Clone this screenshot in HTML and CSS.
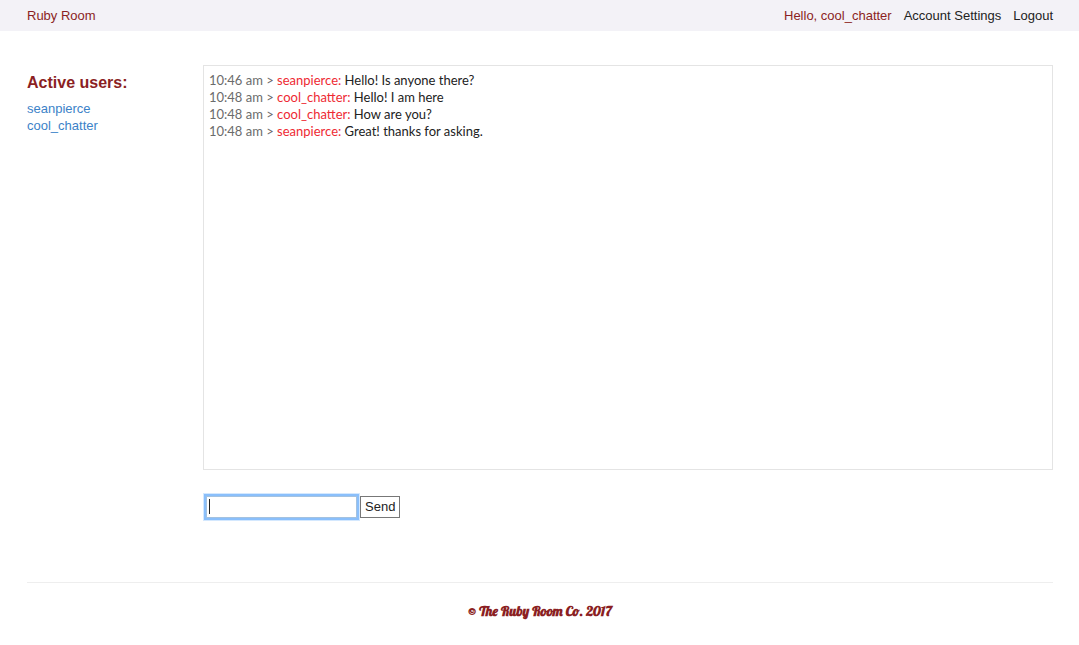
FILE: index.html
```html
<!DOCTYPE html>
<html lang="en">
<head>
<meta charset="utf-8">
<meta name="viewport" content="width=device-width, initial-scale=1">
<title>Ruby Room</title>
<link rel="stylesheet" href="styles.css">
</head>
<body>
<header class="topbar">
  <a class="brand" href="#">Ruby Room</a>
  <nav class="topnav">
    <span class="greeting">Hello, cool_chatter</span>
    <a href="#">Account Settings</a>
    <a href="#">Logout</a>
  </nav>
</header>
<main class="room">
  <aside class="users">
    <h1 class="users-title">Active users:</h1>
    <ul class="users-list">
      <li><a href="#">seanpierce</a></li>
      <li><a href="#">cool_chatter</a></li>
    </ul>
  </aside>
  <section class="chat">
    <div class="messages">
      <p class="message"><span class="time">10:46 am &gt;</span> <span class="author">seanpierce:</span> Hello! Is anyone there?</p>
      <p class="message"><span class="time">10:48 am &gt;</span> <span class="author">cool_chatter:</span> Hello! I am here</p>
      <p class="message"><span class="time">10:48 am &gt;</span> <span class="author">cool_chatter:</span> How are you?</p>
      <p class="message"><span class="time">10:48 am &gt;</span> <span class="author">seanpierce:</span> Great! thanks for asking.</p>
    </div>
    <form class="composer">
      <span class="composer-field">
        <input class="composer-input" type="text" aria-label="Message" autocomplete="off" autofocus>
      </span>
      <button class="composer-send" type="button">Send</button>
    </form>
  </section>
</main>
<footer class="footer">© The Ruby Room Co. 2017</footer>
</body>
</html>
```

FILE: styles.css
```css
* {
  box-sizing: border-box;
}

body {
  margin: 0;
  background: #fff;
  color: #222;
  font: 13px/17px "Liberation Sans", Arial, sans-serif;
}

a {
  color: inherit;
  text-decoration: none;
}

.topbar {
  display: flex;
  justify-content: space-between;
  padding: 7px 26px 7px 27px;
  background: #f3f2f7;
}

.brand,
.greeting {
  color: #8b1f23;
}

.topnav {
  display: flex;
  gap: 12px;
}

.room {
  display: flex;
  padding: 34px 26px 0 27px;
}

.users {
  flex: 0 0 176px;
  padding-top: 8px;
}

.users-title {
  margin: 0 0 8px;
  color: #8b1f23;
  font-size: 16px;
  line-height: 19px;
}

.users-list {
  margin: 0;
  padding: 0;
  list-style: none;
  color: #3c82c8;
}

.chat {
  flex: 1;
  min-width: 0;
}

.messages {
  min-height: 405px;
  padding: 6px 5px;
  border: 1px solid #e4e4e4;
  font-family: Lato, "Open Sans", sans-serif;
}

.message {
  margin: 0;
}

.time {
  color: #6b6b6b;
}

.author {
  color: #ee2a33;
}

.composer {
  display: flex;
  align-items: center;
  gap: 3px;
  padding: 26px 0 0 3px;
}

.composer-field {
  position: relative;
  display: flex;
}

/* Text cursor of the empty field */
.composer-field::after {
  content: "";
  position: absolute;
  top: 3px;
  left: 3px;
  width: 1px;
  height: 15px;
  background: #222;
}

.composer-input {
  width: 151px;
  height: 22px;
  padding: 1px 2px;
  border: 1px solid #a4c2e0;
  outline: 2px solid #8abffb;
  box-shadow: 0 0 0 3px #d4e8fe;
  caret-color: transparent;
  font: inherit;
}

.composer-send {
  height: 22px;
  padding: 0 4px 1px;
  border: 1px solid #777;
  background: #fff;
  color: #222;
  font: inherit;
}

.footer {
  margin: 64px 26px 0 27px;
  padding: 19px 0 24px;
  border-top: 1px solid #eee;
  color: #8b1f23;
  font: bold 14px/19px Lobster, "Liberation Serif", serif;
  text-align: center;
}
```
